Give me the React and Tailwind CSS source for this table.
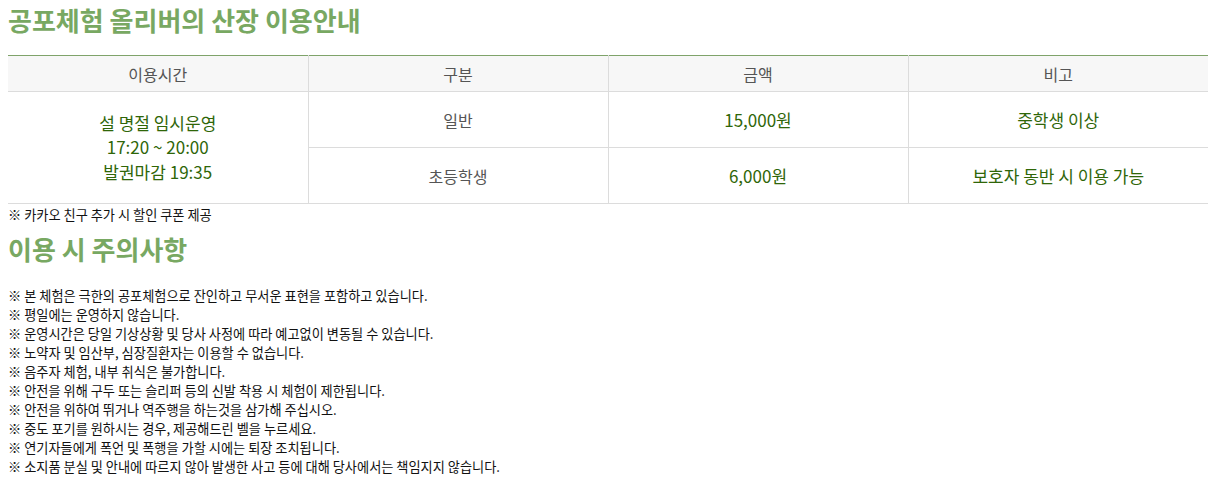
const notices = [
  '본 체험은 극한의 공포체험으로 잔인하고 무서운 표현을 포함하고 있습니다.',
  '평일에는 운영하지 않습니다.',
  '운영시간은 당일 기상상황 및 당사 사정에 따라 예고없이 변동될 수 있습니다.',
  '노약자 및 임산부, 심장질환자는 이용할 수 없습니다.',
  '음주자 체험, 내부 취식은 불가합니다.',
  '안전을 위해 구두 또는 슬리퍼 등의 신발 착용 시 체험이 제한됩니다.',
  '안전을 위하여 뛰거나 역주행을 하는것을 삼가해 주십시오.',
  '중도 포기를 원하시는 경우, 제공해드린 벨을 누르세요.',
  '연기자들에게 폭언 및 폭행을 가할 시에는 퇴장 조치됩니다.',
  '소지품 분실 및 안내에 따르지 않아 발생한 사고 등에 대해 당사에서는 책임지지 않습니다.',
];

const App = () => {
  return (
    <div className="w-[1222px] h-[478px] bg-white px-2 font-['Noto_Sans_CJK_KR','Noto_Sans',sans-serif] text-[#222]">
      <h2 className="pt-[5px] text-[26px] leading-[30px] font-bold text-[#78a862]">공포체험 올리버의 산장 이용안내</h2>

      <table className="mt-[20px] w-[1200px] border-collapse table-fixed text-center">
        <thead>
          <tr className="bg-[#f7f7f7] border-t border-t-[#7fa36a] border-b border-b-[#dcdcdc]">
            <th className="h-[36px] font-normal text-[16px] text-[#555] border-r border-[#dcdcdc]">이용시간</th>
            <th className="font-normal text-[16px] text-[#555] border-r border-[#dcdcdc]">구분</th>
            <th className="font-normal text-[16px] text-[#555] border-r border-[#dcdcdc]">금액</th>
            <th className="font-normal text-[16px] text-[#555]">비고</th>
          </tr>
        </thead>
        <tbody>
          <tr className="border-b border-[#dcdcdc]">
            <td rowSpan={2} className="border-r border-[#dcdcdc] text-[17px] leading-[24.5px] text-[#2f6608]">
              설 명절 임시운영<br />17:20 ~ 20:00<br />발권마감 19:35
            </td>
            <td className="h-[56px] border-r border-[#dcdcdc] text-[16px] text-[#555]">일반</td>
            <td className="border-r border-[#dcdcdc] text-[17px] text-[#2f6608]">15,000원</td>
            <td className="text-[17px] text-[#2f6608]">중학생 이상</td>
          </tr>
          <tr className="border-b border-[#dcdcdc]">
            <td className="h-[56px] border-r border-[#dcdcdc] text-[16px] text-[#555]">초등학생</td>
            <td className="border-r border-[#dcdcdc] text-[17px] text-[#2f6608]">6,000원</td>
            <td className="text-[17px] text-[#2f6608]">보호자 동반 시 이용 가능</td>
          </tr>
        </tbody>
      </table>

      <p className="text-[13.2px] leading-[19px] text-[#111] mt-[1px]">※ 카카오 친구 추가 시 할인 쿠폰 제공</p>

      <h2 className="mt-[10px] text-[26px] leading-[30px] font-bold text-[#78a862]">이용 시 주의사항</h2>

      <ul className="mt-[22px] text-[13.2px] leading-[19px] text-[#111]">
        {notices.map((n) => (
          <li key={n}>※ {n}</li>
        ))}
      </ul>
    </div>
  );
};

export default App;
